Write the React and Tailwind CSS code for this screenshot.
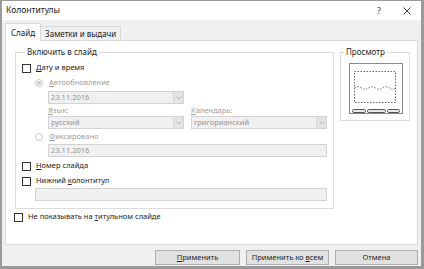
import React from "react";

const Check = () => (
  <span className="w-[9px] h-[9px] border border-[#333] bg-white shrink-0 block" />
);

const Radio = ({ on }) => (
  <span className="w-[8px] h-[8px] rounded-full border border-[#c9c9c9] bg-white shrink-0 flex items-center justify-center">
    {on && <span className="w-[4px] h-[4px] rounded-full bg-[#c9c9c9] block" />}
  </span>
);

const Chevron = () => (
  <svg width="6" height="4" viewBox="0 0 6 4" className="block">
    <path d="M0.5 0.5 L3 3 L5.5 0.5" fill="none" stroke="#b5b5b5" strokeWidth="1" />
  </svg>
);

const Field = ({ value, combo, className }) => (
  <div className={"h-[13px] border border-[#d3d3d3] bg-[#f0f0f0] flex items-center justify-between pl-[2px] " + className}>
    <span className="text-[#959595] leading-none">{value}</span>
    {combo && (
      <span className="w-[10px] h-[11px] bg-[#e3e3e3] border-l border-[#d9d9d9] flex items-center justify-center">
        <Chevron />
      </span>
    )}
  </div>
);

const U = ({ children }) => <span className="underline underline-offset-[1px]">{children}</span>;

export default function App() {
  return (
    <div className="w-[424px] h-[269px] bg-[#f0f0f0] border-l-[2px] border-r-[3px] border-b-[3px] border-t border-[#9a9a9a] flex flex-col font-['Noto_Sans',sans-serif] text-[7.5px] text-[#222] overflow-hidden">
      {/* title bar */}
      <div className="h-[19px] bg-white flex items-center justify-between pl-[4px] pr-[10px] shrink-0">
        <span className="text-[8.5px] text-[#222]">Колонтитулы</span>
        <div className="flex items-center gap-[22px]">
          <span className="text-[9px] text-[#444]">?</span>
          <svg width="8" height="8" viewBox="0 0 8 8" className="block">
            <path d="M0.5 0.5 L7.5 7.5 M7.5 0.5 L0.5 7.5" stroke="#444" strokeWidth="1" />
          </svg>
        </div>
      </div>

      {/* body */}
      <div className="flex-1 flex flex-col px-[3px]">
        {/* tabs */}
        <div className="h-[20px] flex items-end shrink-0 text-[8px]">
          <div className="h-[18px] px-[5px] bg-white border-l border-t border-r border-[#d9d9d9] flex items-center -mb-px relative z-10">
            Слайд
          </div>
          <div className="h-[14px] px-[4px] bg-[#f0f0f0] border-t border-r border-[#d9d9d9] flex items-center">
            Заметки и выдачи
          </div>
        </div>

        {/* panel */}
        <div className="h-[205px] bg-white border border-[#d9d9d9] flex flex-col pl-[8px] pr-[7px] pt-[6px] shrink-0">
          <div className="flex gap-[6px]">
            {/* include group */}
            <fieldset className="w-[319px] ml-[1px] border border-[#dcdcdc] flex flex-col pl-[6px] pr-[6px] pb-[7px]">
              <legend className="ml-[3px] px-[2px] leading-[10px] text-[8px] text-[#222]">Включить в слайд</legend>
              <div className="h-[12px] mt-[5px] flex items-center gap-[5px]">
                <Check />
                <span><U>Д</U>ату и время</span>
              </div>
              <div className="h-[12px] mt-[3px] flex items-center gap-[6px] pl-[13px] text-[#9d9d9d]">
                <Radio on />
                <span><U>А</U>втообновление</span>
              </div>
              <div className="mt-[2px] pl-[26px] flex">
                <Field value="23.11.2016" combo className="w-[136px]" />
              </div>
              <div className="h-[10px] mt-[2px] pl-[26px] flex items-center text-[#9d9d9d]">
                <span className="w-[143px]"><U>Я</U>зык:</span>
                <span><U>К</U>алендарь:</span>
              </div>
              <div className="pl-[26px] flex gap-[7px]">
                <Field value="русский" combo className="w-[136px]" />
                <Field value="григорианский" combo className="flex-1" />
              </div>
              <div className="h-[12px] mt-[2px] flex items-center gap-[6px] pl-[13px] text-[#9d9d9d]">
                <Radio />
                <span><U>Ф</U>иксировано</span>
              </div>
              <div className="mt-[1px] pl-[26px] flex">
                <Field value="23.11.2016" className="flex-1" />
              </div>
              <div className="h-[12px] mt-[3px] flex items-center gap-[5px]">
                <Check />
                <span><U>Н</U>омер слайда</span>
              </div>
              <div className="h-[12px] mt-[3px] flex items-center gap-[5px]">
                <Check />
                <span>Нижний <U>к</U>олонтитул</span>
              </div>
              <div className="mt-[1px] pl-[13px] flex">
                <Field value="" className="flex-1" />
              </div>
            </fieldset>

            {/* preview group */}
            <fieldset className="w-[70px] h-[74px] border border-[#dcdcdc] flex flex-col">
              <legend className="ml-[3px] px-[2px] leading-[10px] text-[8px] text-[#222]">Просмотр</legend>
              <svg width="68" height="62" viewBox="0 0 68 62" className="block">
                <rect x="8.5" y="6.5" width="53" height="50" fill="white" stroke="#8a8a8a" strokeWidth="1" />
                <rect x="13.5" y="14.5" width="41" height="31" fill="none" stroke="#666" strokeWidth="1" strokeDasharray="1.5 1.5" />
                <path d="M13.5 31 Q17 28.5 20.5 31 T27.5 31 T34.5 31 T41.5 31 T48.5 31 T54.5 31" fill="none" stroke="#666" strokeWidth="1" strokeDasharray="1.5 1.5" />
                <rect x="11.5" y="52.5" width="13" height="3" rx="1.2" fill="#e8e8e8" stroke="#555" strokeWidth="1" />
                <rect x="26.5" y="52.5" width="18" height="3" rx="1.2" fill="#e8e8e8" stroke="#555" strokeWidth="1" />
                <rect x="46.5" y="52.5" width="12" height="3" rx="1.2" fill="#e8e8e8" stroke="#555" strokeWidth="1" />
              </svg>
            </fieldset>
          </div>

          <div className="h-[12px] mt-[2px] flex items-center gap-[5px]">
            <Check />
            <span>Не показывать на <U>т</U>итульном слайде</span>
          </div>
        </div>

        {/* buttons */}
        <div className="flex justify-end gap-[6px] pt-[5px]">
          <button className="w-[85px] h-[15px] bg-[#e1e1e1] border border-[#adadad] flex items-center justify-center text-[7.5px] text-[#222]">
            <span><U>П</U>рименить</span>
          </button>
          <button className="w-[83px] h-[15px] bg-[#e1e1e1] border border-[#adadad] flex items-center justify-center text-[7.5px] text-[#222]">
            <span>Применить ко <U>в</U>сем</span>
          </button>
          <button className="w-[83px] h-[15px] bg-[#e1e1e1] border border-[#adadad] flex items-center justify-center text-[7.5px] text-[#222]">
            <span>Отмена</span>
          </button>
        </div>
      </div>
    </div>
  );
}
